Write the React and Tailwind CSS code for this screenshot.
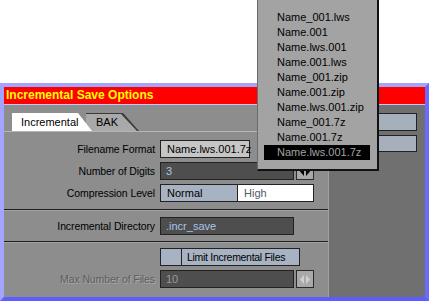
import React from 'react';

const font = { fontFamily: '"Liberation Sans", Arial, sans-serif' };

const popupItems = [
    'Name_001.lws',
    'Name.001',
    'Name.lws.001',
    'Name.001.lws',
    'Name_001.zip',
    'Name.001.zip',
    'Name.lws.001.zip',
    'Name_001.7z',
    'Name.001.7z',
    'Name.lws.001.7z',
];

const Arrows = ({ disabled }) => (
    <div className="w-[18px] h-[18px] ml-[2px] bg-[#a9a9a9] border border-[#2a2a2a] flex items-center justify-center">
        <svg width="10" height="9" viewBox="0 0 10 9">
            <path d="M4 0 L0 4.5 L4 9 Z" fill={disabled ? '#d0d0d0' : '#000'} />
            <path d="M6 0 L10 4.5 L6 9 Z" fill={disabled ? '#d0d0d0' : '#000'} />
        </svg>
    </div>
);

const Label = ({ children, disabled }) => (
    <div
        className={`w-[156px] pr-[5px] text-right text-[10.5px] tracking-[-0.1px] leading-[18px] whitespace-nowrap ${
            disabled ? 'text-[#5e5e5e] [text-shadow:1px_1px_0_#a8a8a8]' : 'text-black'
        }`}
    >
        {children}
    </div>
);

const Separator = () => (
    <div className="w-full">
        <div className="h-px bg-[#1e1e1e]" />
        <div className="h-px bg-[#a4a4a4]" />
    </div>
);

export default function App() {
    return (
        <div className="w-[429px] h-[301px] bg-white relative overflow-hidden" style={font}>
            <div className="mt-[83px] h-[218px] border-t-[4px] border-l-[4px] border-r-[4px] border-b-[4px] border-t-[#a4a4ff] border-l-[#a4a4ff] border-r-[#6a6aff] border-b-[#5c5cff] flex flex-col">
                <div className="h-[17px] bg-[#ff0000] pl-[2px] text-[12px] font-bold text-[#ffff00] leading-[17px]">
                    Incremental Save Options
                </div>
                <div className="h-px bg-[#c4c4ff]" />
                <div className="flex flex-1">
                    <div className="w-[325px] bg-[#8d8d8d] border-r border-[#a0a0a0] flex flex-col">
                        <div className="relative h-[26px]">
                            <div className="absolute left-[82px] top-[8px] w-[53px] h-[18px] bg-[#3a3a3a] [clip-path:polygon(0_0,37px_0,53px_18px,0_18px)]" />
                            <div className="absolute left-[82px] top-[9px] w-[52px] h-[17px] bg-[#a9a9a9] [clip-path:polygon(0_0,35px_0,51px_17px,0_17px)] text-[11px] leading-[17px] pl-[10px] text-black">
                                BAK
                            </div>
                            <div className="absolute left-[8px] top-[8px] w-[80px] h-[18px] bg-white [clip-path:polygon(0_0,66px_0,80px_18px,0_18px)] text-[11px] leading-[18px] pl-[9px] text-black">
                                Incremental
                            </div>
                        </div>
                        <div className="h-px bg-[#b6b6b6]" />
                        <div className="flex flex-col pt-[8px]">
                            <div className="flex items-center h-[18px]">
                                <Label>Filename Format</Label>
                                <div className="w-[90px] h-[18px] bg-[#c6c6c6] border border-[#222] text-[11px] leading-[16px] pl-[6px] text-black whitespace-nowrap">
                                    Name.lws.001.7z
                                </div>
                            </div>
                            <div className="flex items-center h-[18px] mt-[4px]">
                                <Label>Number of Digits</Label>
                                <div className="w-[134px] h-[18px] bg-[#4e4e4e] border border-[#222] text-[11px] leading-[16px] pl-[5px] text-[#a9c4e6]">
                                    3
                                </div>
                                <Arrows />
                            </div>
                            <div className="flex items-center h-[18px] mt-[4px]">
                                <Label>Compression Level</Label>
                                <div className="w-[78px] h-[18px] bg-[#a7b3c3] border border-[#222] text-[11px] leading-[16px] pl-[6px] text-black">
                                    Normal
                                </div>
                                <div className="w-[76px] h-[18px] bg-white border border-[#222] border-l-0 text-[11px] leading-[16px] pl-[6px] text-[#505a6a]">
                                    High
                                </div>
                            </div>
                            <div className="mt-[7px]">
                                <Separator />
                            </div>
                            <div className="flex items-center h-[18px] mt-[6px]">
                                <Label>Incremental Directory</Label>
                                <div className="w-[134px] h-[18px] bg-[#4e4e4e] border border-[#222] text-[11px] leading-[16px] pl-[5px] text-[#a9c4e6]">
                                    .incr_save
                                </div>
                            </div>
                            <div className="mt-[6px]">
                                <Separator />
                            </div>
                            <div className="flex items-center h-[18px] mt-[5px]">
                                <div className="w-[156px]" />
                                <div className="w-[22px] h-[18px] bg-[#a7b3c3] border border-[#222]" />
                                <div className="w-[118px] h-[18px] bg-[#a7b3c3] border border-[#222] border-l-0 text-[10.5px] tracking-[-0.3px] leading-[16px] pl-[5px] text-black whitespace-nowrap">
                                    Limit Incremental Files
                                </div>
                            </div>
                            <div className="flex items-center h-[18px] mt-[4px]">
                                <Label disabled>Max Number of Files</Label>
                                <div className="w-[134px] h-[18px] bg-[#4e4e4e] border border-[#222] text-[11px] leading-[16px] pl-[5px] text-[#9a9a9a]">
                                    10
                                </div>
                                <Arrows disabled />
                            </div>
                        </div>
                    </div>
                    <div className="flex-1 bg-[#707070] flex flex-col pt-[8px] pl-[6px] pr-[8px] gap-[4px]">
                        <div className="h-[18px] bg-[#a6b0bc] border border-[#222]" />
                        <div className="h-[17px] bg-[#a6b0bc] border border-[#222]" />
                    </div>
                </div>
            </div>

            <div className="absolute left-[257px] top-0 w-[122px] h-[171px] bg-[#a3a3a3] border-l border-[#6a6a6a] border-r-2 border-r-[#111] border-b-2 border-b-[#111] pt-[10px] pl-[6px] pr-[7px]">
                {popupItems.map((item, index) => (
                    <div
                        key={item}
                        className={`h-[15px] text-[11px] leading-[15px] pl-[13px] whitespace-nowrap ${
                            index === popupItems.length - 1 ? 'bg-black text-[#a3a3a3]' : 'text-black'
                        }`}
                    >
                        {item}
                    </div>
                ))}
            </div>
        </div>
    );
}
